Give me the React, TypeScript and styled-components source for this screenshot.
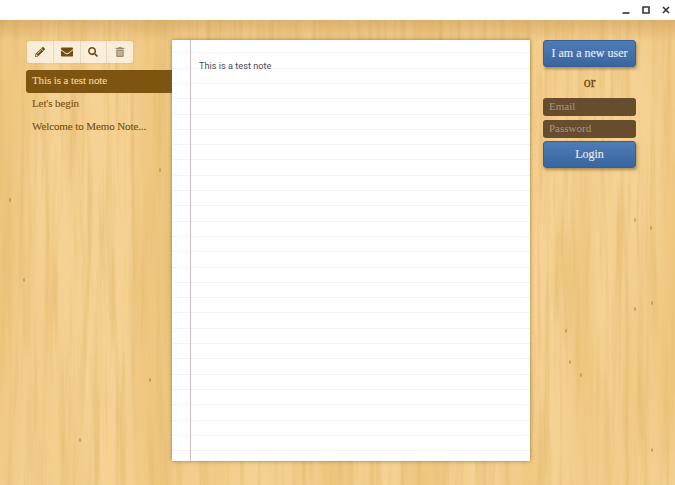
import React from 'react'
import styled, { createGlobalStyle } from 'styled-components'
import { FaPencilAlt, FaEnvelope, FaSearch, FaTrashAlt } from 'react-icons/fa'

const GlobalStyle = createGlobalStyle`
  html, body { margin: 0; padding: 0; height: 100%; overflow: hidden; }
  #root { height: 100%; }
`

const Frame = styled.div`
  width: 675px;
  height: 485px;
  display: flex;
  flex-direction: column;
  font-family: "Liberation Serif", serif;
`

const TitleBar = styled.div`
  height: 20px;
  flex: none;
  background: #fff;
  display: flex;
  justify-content: flex-end;
  align-items: center;
  gap: 10px;
  padding-right: 4px;
  color: #333;
`

const WinIcon = styled.svg`
  width: 10px;
  height: 10px;
  fill: none;
  stroke: currentColor;
  stroke-width: 1.6;
`

const Desk = styled.div`
  flex: 1;
  position: relative;
  overflow: hidden;
  display: flex;
  align-items: flex-start;
  padding: 20px 39px 24px 26px;
  background: #f5d193;
`

const WoodGrain = styled.svg`
  position: absolute;
  inset: 0;
  width: 100%;
  height: 100%;
`

const Sidebar = styled.aside`
  position: relative;
  width: 146px;
  flex: none;
  display: flex;
  flex-direction: column;
`

const Toolbar = styled.div`
  display: flex;
  width: 106px;
  height: 22px;
  margin: 1px 0 7px 1px;
  border-radius: 3px;
  overflow: hidden;
  background: rgba(250, 243, 232, .85);
  box-shadow: 0 0 2px rgba(120, 80, 20, .2);
`

const ToolButton = styled.button`
  flex: 1;
  padding: 0;
  border: 0;
  background: transparent;
  border-left: 1px solid rgba(190, 165, 130, .3);
  color: ${p => (p.$muted ? '#a08c6c' : '#6f4c12')};
  font-size: ${p => p.$size || 10}px;
  display: flex;
  align-items: center;
  justify-content: center;
  &:first-child { border-left: 0; }
`

const NoteList = styled.ul`
  list-style: none;
  margin: 0;
  padding: 0;
  display: flex;
  flex-direction: column;
`

const NoteItem = styled.li`
  height: 23px;
  line-height: 21px;
  padding-left: 6px;
  font-size: 11px;
  letter-spacing: -.1px;
  -webkit-text-stroke: .15px currentColor;
  white-space: nowrap;
  color: ${p => (p.$active ? '#ecd39c' : '#7a5414')};
  background: ${p => (p.$active ? '#7d5410' : 'transparent')};
  border-radius: 3px 0 0 3px;
`

const Paper = styled.main`
  position: relative;
  width: 358px;
  height: 421px;
  flex: none;
  box-sizing: border-box;
  padding: 19px 0 0 27px;
  background-color: #fff;
  background-image:
    linear-gradient(90deg, transparent 18px, #d4bcc3 18px, #d4bcc3 19px, transparent 19px),
    repeating-linear-gradient(180deg, transparent 0 12.3px, #f4f3f4 12.3px 13.3px, transparent 13.3px 15.3px);
  box-shadow: 0 0 4px rgba(125, 100, 35, .75);
  font-family: Roboto, sans-serif;
  font-size: 9.2px;
  line-height: 14px;
  color: #4c4c52;
`

const Account = styled.section`
  position: relative;
  width: 93px;
  flex: none;
  margin-left: 13px;
  display: flex;
  flex-direction: column;
`

const BlueButton = styled.button`
  height: 27px;
  padding: 0;
  border: 1px solid #3a5f96;
  border-radius: 3px;
  background: linear-gradient(180deg, #4f7cb7, #3a669f);
  box-shadow: 1px 2px 3px rgba(90, 60, 10, .45);
  color: #e6ecf2;
  font-family: inherit;
  font-size: 12px;
  -webkit-text-stroke: .15px currentColor;
`

const OrLabel = styled.div`
  height: 31px;
  line-height: 31px;
  text-align: center;
  font-size: 14px;
  -webkit-text-stroke: .3px currentColor;
  color: #6f4c12;
`

const Field = styled.input`
  box-sizing: border-box;
  width: 93px;
  height: 18px;
  margin-bottom: 4px;
  padding: 0 6px 2px;
  border: 0;
  border-radius: 3px;
  background: rgba(88, 62, 36, .9);
  color: #eee;
  font-family: inherit;
  font-size: 11px;
  &::placeholder { color: #a69784; opacity: 1; }
  &:last-of-type { margin-bottom: 3px; }
`

const knots = [
  [635, 200], [651, 208], [635, 289], [652, 283], [566, 311], [570, 342], [581, 355],
  [160, 150], [482, 150], [24, 260], [10, 180], [150, 360], [80, 420], [652, 430],
]

const App: React.FC = () => (
  <Frame>
    <GlobalStyle />
    <TitleBar>
      <WinIcon viewBox="0 0 10 10"><path d="M1.5 8h7" /></WinIcon>
      <WinIcon viewBox="0 0 10 10"><path d="M2 2h6v6H2z" /></WinIcon>
      <WinIcon viewBox="0 0 10 10"><path d="M2 2l6 6M8 2l-6 6" /></WinIcon>
    </TitleBar>
    <Desk>
      <WoodGrain>
        <defs>
          <filter id="grain" x="0" y="0" width="100%" height="100%">
            <feTurbulence type="fractalNoise" baseFrequency="0.16 0.006" numOctaves="4" seed="11" />
            <feColorMatrix
              type="matrix"
              values="0 0 0 0 0.80  0 0 0 0 0.52  0 0 0 0 0.18  2.2 0 0 0 -0.95"
            />
          </filter>
          <filter id="bands" x="0" y="0" width="100%" height="100%">
            <feTurbulence type="fractalNoise" baseFrequency="0.022 0.002" numOctaves="2" seed="4" />
            <feColorMatrix
              type="matrix"
              values="0 0 0 0 0.85  0 0 0 0 0.55  0 0 0 0 0.20  2.4 0 0 0 -0.95"
            />
          </filter>
          <linearGradient id="topShade" x1="0" y1="0" x2="0" y2="1">
            <stop offset="0" stopColor="#c08a45" stopOpacity=".4" />
            <stop offset="1" stopColor="#c08a45" stopOpacity="0" />
          </linearGradient>
        </defs>
        <rect width="100%" height="100%" filter="url(#bands)" />
        <rect width="100%" height="100%" filter="url(#grain)" />
        <rect width="100%" height="22" fill="url(#topShade)" />
        {knots.map(([x, y]) => (
          <ellipse key={`${x}-${y}`} cx={x} cy={y} rx="1" ry="2" fill="#b98440" opacity=".7" />
        ))}
      </WoodGrain>
      <Sidebar>
        <Toolbar>
          <ToolButton><FaPencilAlt /></ToolButton>
          <ToolButton $size={12}><FaEnvelope /></ToolButton>
          <ToolButton><FaSearch /></ToolButton>
          <ToolButton $muted><FaTrashAlt /></ToolButton>
        </Toolbar>
        <NoteList>
          <NoteItem $active>This is a test note</NoteItem>
          <NoteItem>Let's begin</NoteItem>
          <NoteItem>Welcome to Memo Note...</NoteItem>
        </NoteList>
      </Sidebar>
      <Paper>This is a test note</Paper>
      <Account>
        <BlueButton>I am a new user</BlueButton>
        <OrLabel>or</OrLabel>
        <Field placeholder="Email" />
        <Field placeholder="Password" />
        <BlueButton>Login</BlueButton>
      </Account>
    </Desk>
  </Frame>
)

export default App
